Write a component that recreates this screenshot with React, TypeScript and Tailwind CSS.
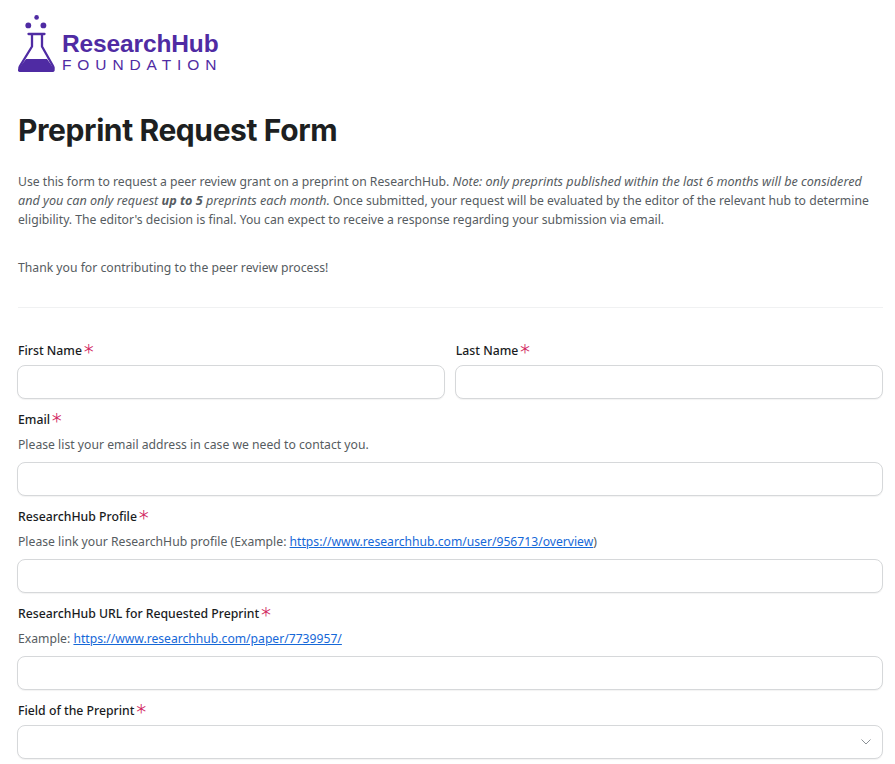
const LABEL_FONT = "font-['Noto_Sans','Open_Sans',sans-serif]";

function Logo() {
  return (
    <div className="flex items-start">
      <svg width="38" height="58" viewBox="0 0 38 58" className="shrink-0 text-[#4f2ba3]" fill="none">
        <circle cx="18.6" cy="2.4" r="2.3" fill="currentColor" />
        <circle cx="10.3" cy="10.4" r="2.9" fill="currentColor" />
        <circle cx="25.4" cy="10.4" r="2.9" fill="currentColor" />
        <path d="M10.5 19h16M14 19v12.5L2 51c-1.4 2.6-.4 4.5 2.6 4.5h27.8c3 0 4-1.9 2.6-4.5L24 31.5V19" stroke="currentColor" strokeWidth="2.3" strokeLinecap="round" strokeLinejoin="round" />
        <path d="M8 44h21l7.4 10.2c.8 1.6-.2 2.8-2.2 2.8H2.4c-2 0-3-1.2-2.2-2.8z" fill="currentColor" />
      </svg>
      <div className="ml-[6px] mt-[15px] font-['Liberation_Sans',sans-serif] text-[#4f2ba3]">
        <div className="text-[24.5px] font-bold leading-[28px] tracking-[-0.13px]">ResearchHub</div>
        <div className="-mt-[2px] text-[15.5px] leading-[17px] tracking-[5.9px]">FOUNDATION</div>
      </div>
    </div>
  );
}

function Field({
  label,
  help,
  select,
  className,
}: {
  label: string;
  help?: React.ReactNode;
  select?: boolean;
  className?: string;
}) {
  return (
    <div className={className}>
      <div className="flex h-[21px] items-center pt-[1px] text-[12.25px] font-medium text-[#1a1c1e]">
        {label}
        <span className="relative top-[2px] ml-[1px] h-[16px] font-['Inter',sans-serif] text-[23px] font-extralight leading-[16px] text-[#d1245e]">
          *
        </span>
      </div>
      {help && <p className="mt-[5px] h-[19px] text-[12.2px] leading-[19px] text-[#565c61]">{help}</p>}
      <div
        className={`-ml-[1px] flex h-[34px] items-center justify-end rounded-lg border border-[#d6d8da] bg-white pr-[10px] shadow-[0_1px_1px_rgba(0,0,0,0.05)] ${help ? "mt-[8px]" : "mt-[4px]"}`}
      >
        {select && (
          <svg width="12" height="8" viewBox="0 0 12 8" fill="none" stroke="#8b9196" strokeWidth="1">
            <path d="M1.5 1.5 6 6l4.5-4.5" />
          </svg>
        )}
      </div>
    </div>
  );
}

export default function App() {
  return (
    <div className={`h-[764px] overflow-hidden bg-white pl-[18px] pr-[12.5px] pt-[15px] ${LABEL_FONT}`}>
      <Logo />
      <h1 className="mt-[37px] font-['Inter',sans-serif] text-[30px] font-bold leading-[40px] tracking-[-0.4px] text-[#1d1f21]">
        Preprint Request Form
      </h1>
      <div className="mt-[22px] text-[12.2px] leading-[19px] text-[#565c61]">
        <p>
          Use this form to request a peer review grant on a preprint on ResearchHub.{" "}
          <em className="text-[12.6px]">
            Note: only preprints published within the last 6 months will be considered and you can only request{" "}
            <strong>up to 5</strong> preprints each month.
          </em>{" "}
          Once submitted, your request will be evaluated by the editor of the relevant hub to determine eligibility. The
          editor's decision is final. You can expect to receive a response regarding your submission via email.
        </p>
        <p className="mt-[29px]">Thank you for contributing to the peer review process!</p>
      </div>
      <hr className="mt-[30px] border-[#f0f1f2]" />
      <div className="mt-[32px] flex flex-col gap-[10px]">
        <div className="flex gap-[11px]">
          <Field label="First Name" className="flex-1" />
          <Field label="Last Name" className="flex-1" />
        </div>
        <Field label="Email" help="Please list your email address in case we need to contact you." />
        <Field
          label="ResearchHub Profile"
          help={
            <>
              Please link your ResearchHub profile (Example:{" "}
              <a href="#" className="text-[12.15px] text-[#1668d8] underline">
                https://www.researchhub.com/user/956713/overview
              </a>
              )
            </>
          }
        />
        <Field
          label="ResearchHub URL for Requested Preprint"
          help={
            <>
              Example:{" "}
              <a href="#" className="text-[12.15px] text-[#1668d8] underline">
                https://www.researchhub.com/paper/7739957/
              </a>
            </>
          }
        />
        <Field label="Field of the Preprint" select />
      </div>
    </div>
  );
}
